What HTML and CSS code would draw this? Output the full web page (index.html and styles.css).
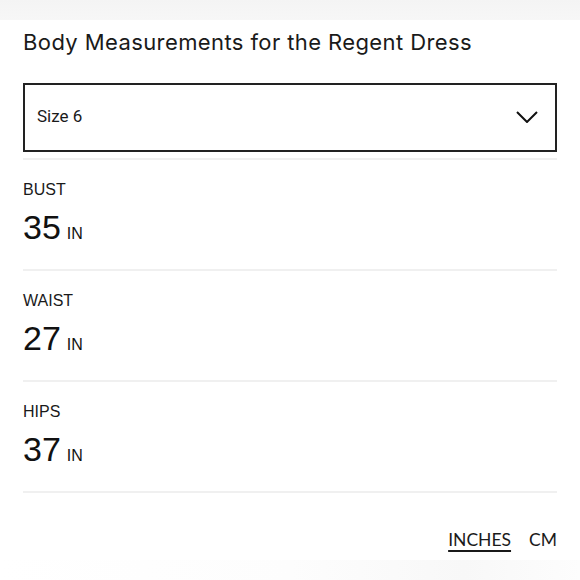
FILE: index.html
```html
<!DOCTYPE html>
<html>
<head>
<meta charset="utf-8">
<link rel="stylesheet" href="styles.css">
</head>
<body>
<div class="topband"></div>
<main class="panel">
  <h1 class="title">Body Measurements for the Regent Dress</h1>
  <div class="select">
    <span class="select-value">Size 6</span>
    <svg class="chevron" width="22" height="12" viewBox="0 0 22 12"><path d="M1 1 L11 11 L21 1" fill="none" stroke="#111" stroke-width="2"/></svg>
  </div>
  <ul class="rows">
    <li class="row">
      <div class="label">BUST</div>
      <div class="value">35<span class="unit">IN</span></div>
    </li>
    <li class="row">
      <div class="label">WAIST</div>
      <div class="value">27<span class="unit">IN</span></div>
    </li>
    <li class="row">
      <div class="label">HIPS</div>
      <div class="value">37<span class="unit">IN</span></div>
    </li>
  </ul>
  <div class="units">
    <span class="unit-opt active">INCHES</span>
    <span class="unit-opt">CM</span>
  </div>
</main>
<div class="bottomband"></div>
</body>
</html>
```
FILE: styles.css
```css
* { box-sizing: border-box; }
html, body { margin: 0; padding: 0; background: #fff; }
body { width: 580px; height: 580px; overflow: hidden; font-family: "Liberation Sans", Arial, sans-serif; color: #111; }
.topband { height: 20px; background: linear-gradient(#f4f4f4, #f7f7f7); }
.panel { padding: 0 23px; }
.title { margin: 9px 0 0; font-family: Inter, "Liberation Sans", sans-serif; font-weight: 400; font-size: 22px; line-height: 26px; color: #1a1a1a; letter-spacing: 0.4px; white-space: nowrap; }
.select { margin-top: 28px; height: 69px; border: 2px solid #222; display: flex; align-items: center; justify-content: space-between; padding: 0 17px 3px 12px; }
.select-value { font-family: Roboto, "Liberation Sans", sans-serif; font-size: 17px; color: #1a1a1a; }
.chevron { display: block; margin-top: 2px; }
.rows { list-style: none; margin: 6px 0 0; padding: 0; border-top: 2px solid #f0f0f0; }
.row { height: 111px; border-bottom: 2px solid #f0f0f0; padding-top: 21px; }
.label { font-size: 16px; line-height: 18px; color: #1a1a1a; }
.value { margin-top: 10px; font-size: 34px; line-height: 36px; color: #111; }
.unit { font-size: 16px; margin-left: 6px; }
.units { display: flex; justify-content: flex-end; gap: 18px; margin-top: 36px; font-family: Lato, "Liberation Sans", sans-serif; font-size: 17.5px; }
.unit-opt { color: #1a1a1a; }
.unit-opt.active { text-decoration: underline; text-underline-offset: 4px; text-decoration-thickness: 2px; }
.bottomband { position: absolute; left: 0; right: 0; top: 560px; height: 20px; background: linear-gradient(90deg, #fff 0%, #fdfdfd 50%, #f8f8f8 80%, #fdfdfd 100%); }
```
